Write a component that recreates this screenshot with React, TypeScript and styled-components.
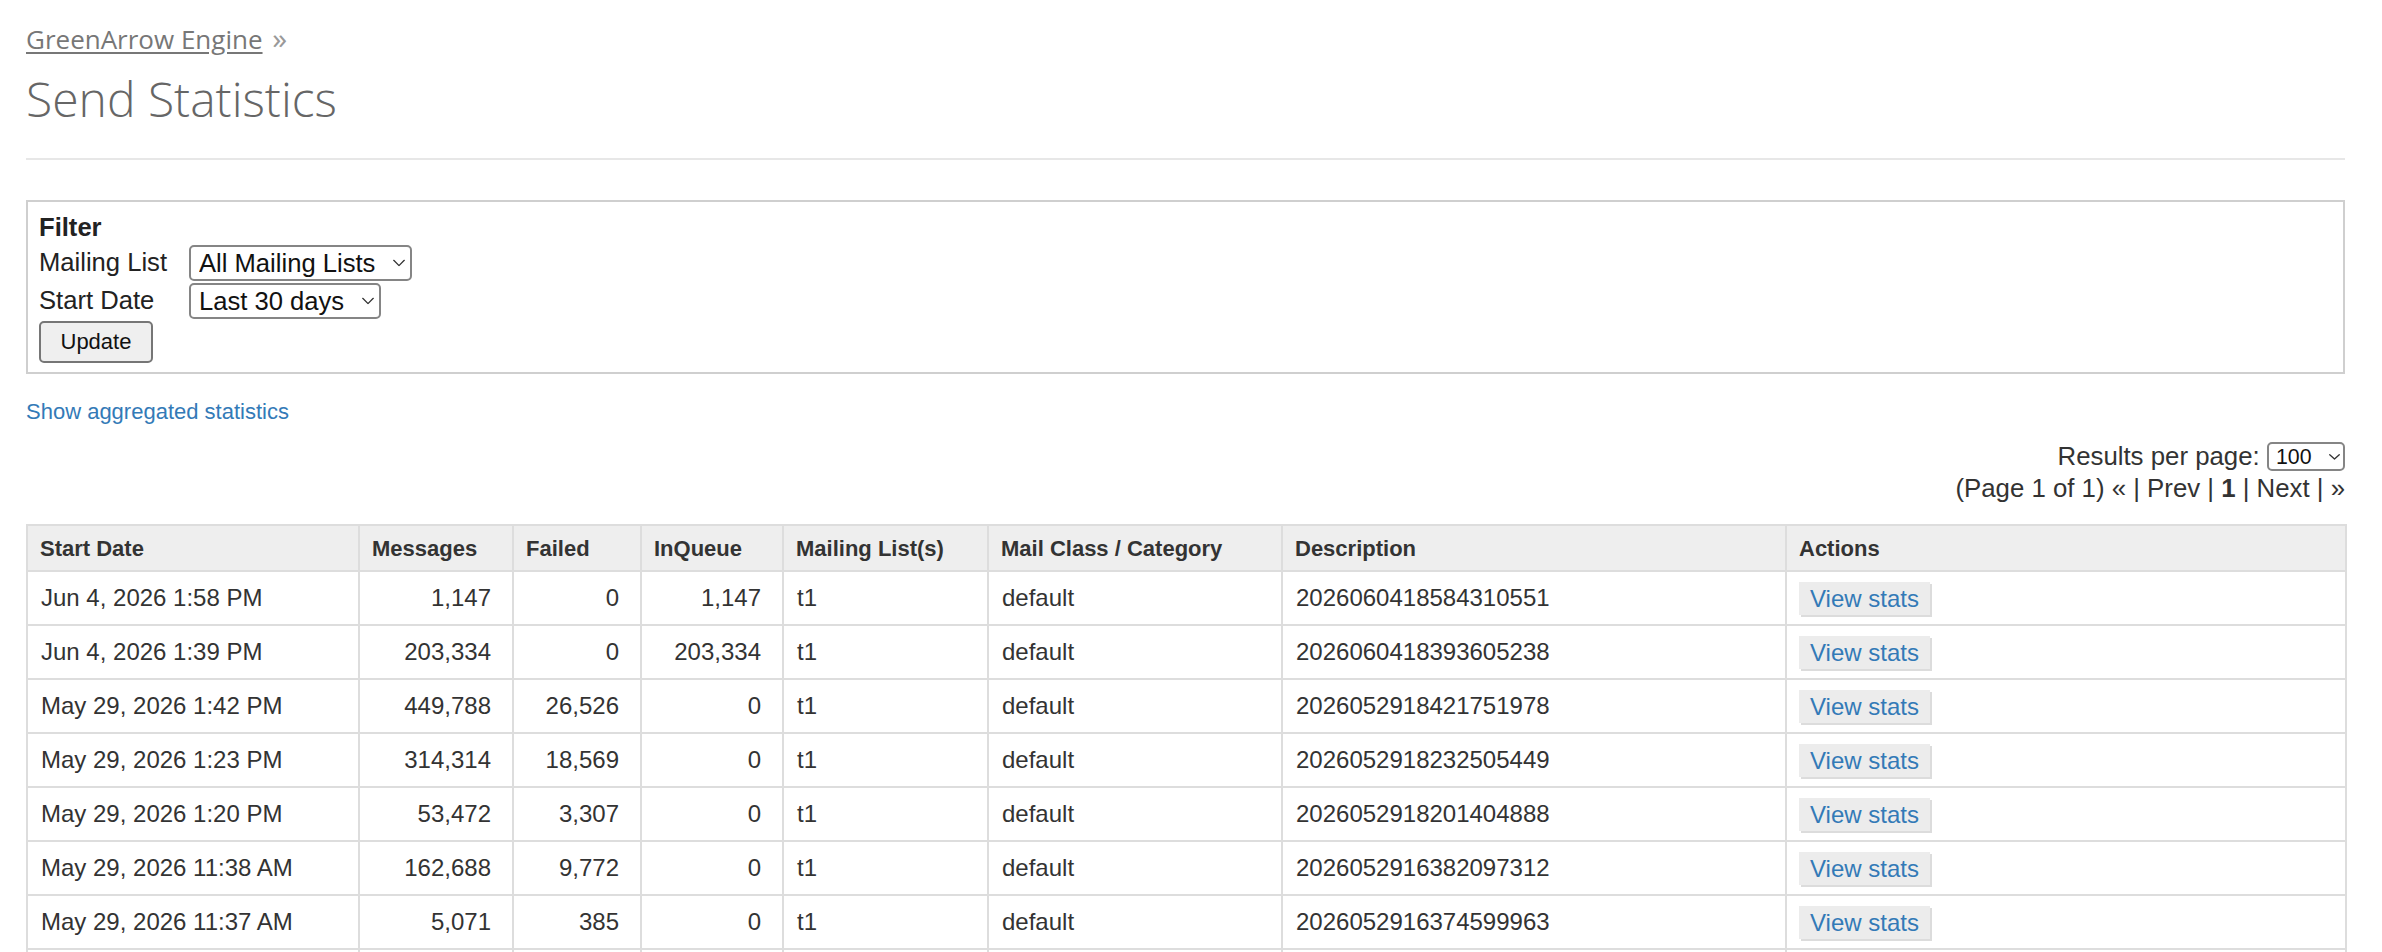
import React from "react";
import styled, { createGlobalStyle } from "styled-components";

const GlobalStyle = createGlobalStyle`
  html, body { margin: 0; padding: 0; background: #ffffff; }
  body { font-family: "Liberation Sans", Arial, sans-serif; color: #333; }
  * { box-sizing: border-box; }
`;

const Page = styled.div`
  padding: 21.5px 37px 0 26px;
`;

const Breadcrumb = styled.div`
  font-family: "Open Sans", "Noto Sans", sans-serif;
  font-size: 26px;
  line-height: 35px;
  height: 35px;
  color: #777;
`;

const CrumbLink = styled.a`
  color: #777;
  text-decoration: underline;
  text-underline-offset: 3px;
  cursor: pointer;
`;

const CrumbSep = styled.span`
  margin-left: 3px;
  font-size: 30px;
  line-height: 0;
  color: #999;
`;

const Title = styled.h1`
  margin: 12.9px 0 0;
  font-family: "Open Sans", "Noto Sans", sans-serif;
  font-weight: 300;
  font-size: 48px;
  line-height: 60px;
  color: #666;
`;

const Rule = styled.div`
  margin-top: 28.6px;
  height: 2px;
  background: #e7e7e7;
`;

const FilterBox = styled.form`
  margin-top: 40px;
  border: 2px solid #cfcfcf;
  padding: 11.4px 11px 9px;
  display: flex;
  flex-direction: column;
  gap: 2px;
  font-size: 25.6px;
  color: #222;
`;

const FilterHeading = styled.div`
  font-weight: 700;
  line-height: 29.4px;
`;

const FilterRow = styled.div`
  display: grid;
  grid-template-columns: 150px auto;
  justify-content: start;
  align-items: center;
`;

const FilterLabel = styled.label`
  line-height: 29.4px;
`;

const SelectWrap = styled.span`
  position: relative;
  display: inline-flex;
  width: fit-content;
`;

const NativeSelect = styled.select<{ $small?: boolean }>`
  appearance: none;
  -webkit-appearance: none;
  font-family: "Liberation Sans", Arial, sans-serif;
  font-size: ${(p) => (p.$small ? "21.3px" : "25.6px")};
  height: ${(p) => (p.$small ? "29.3px" : "36px")};
  padding: ${(p) => (p.$small ? "0 31px 0 7.3px" : "0 34px 0 8px")};
  border: 2px solid #858585;
  border-radius: 5px;
  background: #fff;
  color: #111;
  outline: none;
`;

const Chevron = styled.svg<{ $small?: boolean }>`
  position: absolute;
  right: ${(p) => (p.$small ? "5px" : "7px")};
  top: 50%;
  transform: translateY(-50%);
  pointer-events: none;
`;

const UpdateButton = styled.button`
  width: fit-content;
  height: 42.6px;
  padding: 0 19.5px;
  font-family: "Liberation Sans", Arial, sans-serif;
  font-size: 22px;
  color: #111;
  background: #efefef;
  border: 2px solid #767676;
  border-radius: 5px;
`;

const AggLink = styled.a`
  display: block;
  margin-top: 24.5px;
  font-size: 22px;
  color: #337ab7;
  text-decoration: none;
  cursor: pointer;
`;

const Pager = styled.div`
  margin-top: 17px;
  display: flex;
  flex-direction: column;
  align-items: flex-end;
  font-size: 25.8px;
  color: #333;
`;

const PagerRow = styled.div`
  display: flex;
  align-items: center;
  gap: 7px;
  height: 29.3px;
  line-height: 29.4px;
`;

const PagerLine = styled.div`
  margin-top: 2.5px;
  line-height: 29.4px;
  white-space: pre;
`;

const StatsTable = styled.table`
  margin-top: 21px;
  width: 100%;
  table-layout: fixed;
  border-collapse: collapse;
  border: 2px solid #dddddd;
`;

const HeadCell = styled.th`
  background: #eeeeee;
  border: 2px solid #dddddd;
  padding: 8.5px 12px;
  text-align: left;
  font-size: 22px;
  font-weight: 700;
  line-height: 27px;
  color: #333;
  white-space: nowrap;
`;

const BodyCell = styled.td<{ $num?: boolean }>`
  border: 2px solid #dddddd;
  padding: ${(p) => (p.$num ? "12.2px 21px 12.2px 13px" : "12.2px 13px")};
  text-align: ${(p) => (p.$num ? "right" : "left")};
  font-size: 24px;
  line-height: 27.6px;
  color: #333;
  white-space: nowrap;
`;

const ActionCell = styled.td`
  border: 2px solid #dddddd;
  padding: 9.5px 12px;
  vertical-align: middle;
`;

const ViewStats = styled.a`
  display: block;
  width: fit-content;
  height: 33px;
  padding: 0 11px;
  font-size: 24px;
  line-height: 33px;
  color: #337ab7;
  background: #ececec;
  box-shadow: 2px 2px 0 #dcdcdc;
  text-decoration: none;
  cursor: pointer;
`;

type Col = { label: string; width: number };

const columns: Col[] = [
  { label: "Start Date", width: 332 },
  { label: "Messages", width: 154 },
  { label: "Failed", width: 128 },
  { label: "InQueue", width: 142 },
  { label: "Mailing List(s)", width: 205 },
  { label: "Mail Class / Category", width: 294 },
  { label: "Description", width: 504 },
  { label: "Actions", width: 560 },
];

type Row = {
  date: string;
  messages: string;
  failed: string;
  inQueue: string;
  list: string;
  mailClass: string;
  description: string;
};

const rows: Row[] = [
  { date: "Jun 4, 2026 1:58 PM", messages: "1,147", failed: "0", inQueue: "1,147", list: "t1", mailClass: "default", description: "20260604185843105" + "51" },
  { date: "Jun 4, 2026 1:39 PM", messages: "203,334", failed: "0", inQueue: "203,334", list: "t1", mailClass: "default", description: "20260604183936052" + "38" },
  { date: "May 29, 2026 1:42 PM", messages: "449,788", failed: "26,526", inQueue: "0", list: "t1", mailClass: "default", description: "20260529184217519" + "78" },
  { date: "May 29, 2026 1:23 PM", messages: "314,314", failed: "18,569", inQueue: "0", list: "t1", mailClass: "default", description: "20260529182325054" + "49" },
  { date: "May 29, 2026 1:20 PM", messages: "53,472", failed: "3,307", inQueue: "0", list: "t1", mailClass: "default", description: "20260529182014048" + "88" },
  { date: "May 29, 2026 11:38 AM", messages: "162,688", failed: "9,772", inQueue: "0", list: "t1", mailClass: "default", description: "20260529163820973" + "12" },
  { date: "May 29, 2026 11:37 AM", messages: "5,071", failed: "385", inQueue: "0", list: "t1", mailClass: "default", description: "20260529163745999" + "63" },
];

function ChevronIcon({ small }: { small?: boolean }) {
  const w = small ? 11 : 12;
  const h = small ? 6 : 7;
  return (
    <Chevron $small={small} width={w} height={h} viewBox={`0 0 ${w} ${h}`}>
      <polyline
        points={`0.75,0.75 ${w / 2},${h - 0.9} ${w - 0.75},0.75`}
        fill="none"
        stroke="#333"
        strokeWidth="1.3"
        strokeLinecap="round"
        strokeLinejoin="round"
      />
    </Chevron>
  );
}

function Select({ value, small }: { value: string; small?: boolean }) {
  return (
    <SelectWrap>
      <NativeSelect $small={small} defaultValue={value}>
        <option value={value}>{value}</option>
      </NativeSelect>
      <ChevronIcon small={small} />
    </SelectWrap>
  );
}

export default function App() {
  return (
    <>
      <GlobalStyle />
      <Page>
        <Breadcrumb>
          <CrumbLink>GreenArrow Engine</CrumbLink> <CrumbSep>»</CrumbSep>
        </Breadcrumb>
        <Title>Send Statistics</Title>
        <Rule />
        <FilterBox onSubmit={(e) => e.preventDefault()}>
          <FilterHeading>Filter</FilterHeading>
          <FilterRow>
            <FilterLabel>Mailing List</FilterLabel>
            <Select value="All Mailing Lists" />
          </FilterRow>
          <FilterRow>
            <FilterLabel>Start Date</FilterLabel>
            <Select value="Last 30 days" />
          </FilterRow>
          <UpdateButton type="submit">Update</UpdateButton>
        </FilterBox>
        <AggLink>Show aggregated statistics</AggLink>
        <Pager>
          <PagerRow>
            <span>Results per page:</span>
            <Select value="100" small />
          </PagerRow>
          <PagerLine>
            (Page 1 of 1) « | Prev | <b>1</b> | Next | »
          </PagerLine>
        </Pager>
        <StatsTable>
          <colgroup>
            {columns.map((c) => (
              <col key={c.label} style={{ width: c.width }} />
            ))}
          </colgroup>
          <thead>
            <tr>
              {columns.map((c) => (
                <HeadCell key={c.label}>{c.label}</HeadCell>
              ))}
            </tr>
          </thead>
          <tbody>
            {rows.map((r) => (
              <tr key={r.description}>
                <BodyCell>{r.date}</BodyCell>
                <BodyCell $num>{r.messages}</BodyCell>
                <BodyCell $num>{r.failed}</BodyCell>
                <BodyCell $num>{r.inQueue}</BodyCell>
                <BodyCell>{r.list}</BodyCell>
                <BodyCell>{r.mailClass}</BodyCell>
                <BodyCell>{r.description}</BodyCell>
                <ActionCell>
                  <ViewStats>View stats</ViewStats>
                </ActionCell>
              </tr>
            ))}
            <tr>
              {columns.map((c) => (
                <BodyCell key={c.label} />
              ))}
            </tr>
          </tbody>
        </StatsTable>
      </Page>
    </>
  );
}
